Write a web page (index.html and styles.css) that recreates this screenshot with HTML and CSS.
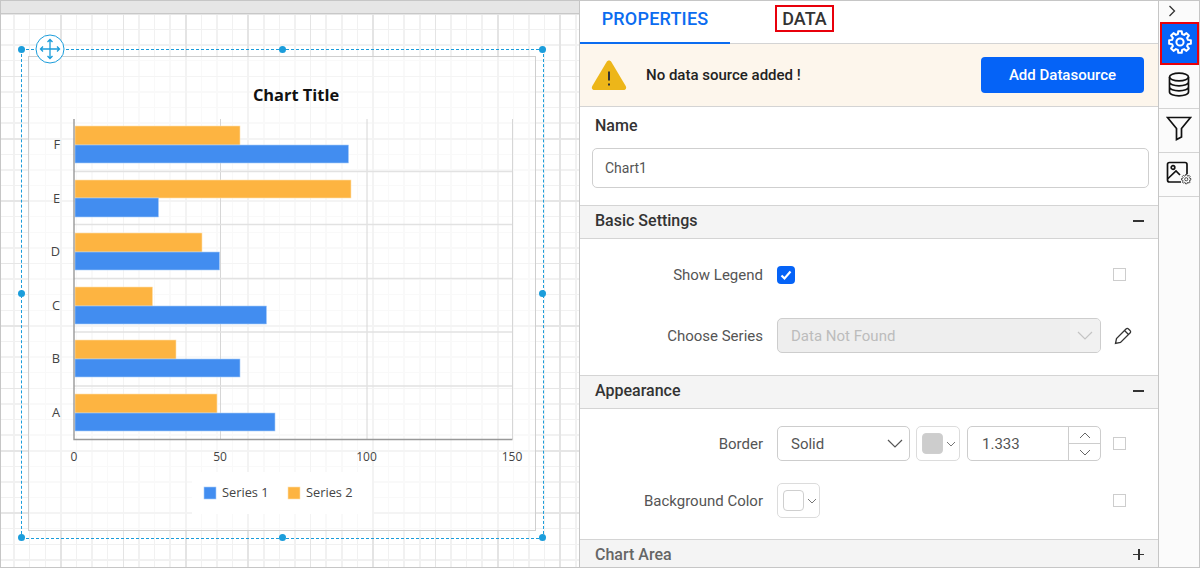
FILE: index.html
```html
<!DOCTYPE html>
<html lang="en">
<head>
  <meta charset="UTF-8">
  <title>Report Designer</title>
  <link rel="stylesheet" href="styles.css">
</head>
<body>

<svg class="defs" width="0" height="0">
  <symbol id="cog" viewBox="0 0 24 24">
    <polygon points="9.88,4.08 10.28,1.14 13.72,1.14 14.12,4.08 16.1,4.9 18.47,3.1 20.9,5.53 19.1,7.9 19.92,9.88 22.86,10.28 22.86,13.72 19.92,14.12 19.1,16.1 20.9,18.47 18.47,20.9 16.1,19.1 14.12,19.92 13.72,22.86 10.28,22.86 9.88,19.92 7.9,19.1 5.53,20.9 3.1,18.47 4.9,16.1 4.08,14.12 1.14,13.72 1.14,10.28 4.08,9.88 4.9,7.9 3.1,5.53 5.53,3.1 7.9,4.9"/>
    <circle cx="12" cy="12" r="3.6"/>
  </symbol>
</svg>

<div class="app">

  <div class="designer">
    <div class="ruler"></div>
    <div class="canvas">
      <div class="item">
        <div class="chart">
          <svg class="chart-svg" width="506" height="473" viewBox="29 57 506 473">
            <g class="grid-lines">
              <path d="M220.5 119V439M367 119V439M512.5 119V439"/>
              <path class="row-line" d="M74 171.5H512M74 224.5H512M74 278.5H512M74 332H512M74 386H512"/>
            </g>
            <g class="bars-orange">
              <rect x="75" y="126" width="165" height="19"/>
              <rect x="75" y="180" width="276" height="18"/>
              <rect x="75" y="233" width="127" height="19"/>
              <rect x="75" y="287" width="77.500" height="19"/>
              <rect x="75" y="340" width="101" height="19"/>
              <rect x="75" y="394" width="142" height="19"/>
            </g>
            <g class="bars-blue">
              <rect x="75" y="145" width="273.500" height="18"/>
              <rect x="75" y="198" width="83.500" height="19"/>
              <rect x="75" y="252" width="144.500" height="18"/>
              <rect x="75" y="306" width="191.500" height="18"/>
              <rect x="75" y="359" width="165" height="18"/>
              <rect x="75" y="413" width="200" height="18"/>
            </g>
            <path class="axis" d="M74 119V439.500H512.500"/>
            <text class="title" x="296" y="100.500" text-anchor="middle">Chart Title</text>
            <g class="labels cat" text-anchor="end">
              <text x="60" y="149">F</text>
              <text x="60" y="203">E</text>
              <text x="60" y="256">D</text>
              <text x="60" y="310">C</text>
              <text x="60" y="363">B</text>
              <text x="60" y="417">A</text>
            </g>
            <g class="labels" text-anchor="middle">
              <text x="74" y="461">0</text>
              <text x="220" y="461">50</text>
              <text x="366.500" y="461">100</text>
              <text x="512" y="461">150</text>
            </g>
            <rect class="legend-bg" x="192" y="472" width="180" height="42"/>
            <rect class="bars-blue" x="204" y="487" width="12" height="12"/>
            <rect class="bars-orange" x="288" y="487" width="12" height="12"/>
            <g class="labels cat">
              <text x="222" y="497">Series 1</text>
              <text x="306" y="497">Series 2</text>
            </g>
          </svg>
        </div>
        <span class="handle h-tl"></span>
        <span class="handle h-tc"></span>
        <span class="handle h-tr"></span>
        <span class="handle h-ml"></span>
        <span class="handle h-mr"></span>
        <span class="handle h-bl"></span>
        <span class="handle h-bc"></span>
        <span class="handle h-br"></span>
        <svg class="move" width="30" height="30" viewBox="0 0 30 30">
          <circle cx="15" cy="15" r="14"/>
          <path d="M15 5.500V24.500M5.500 15H24.500M12.500 8L15 5.500L17.500 8M12.500 22L15 24.500L17.500 22M8 12.500L5.500 15L8 17.500M22 12.500L24.500 15L22 17.500"/>
        </svg>
      </div>
    </div>
  </div>

  <div class="panel">
    <div class="tabs">
      <div class="tab active">PROPERTIES</div>
      <div class="tab tab-data">DATA</div>
    </div>

    <div class="notice">
      <svg class="warn" width="36" height="32" viewBox="0 0 36 32">
        <path class="warn-bg" d="M18 1.500C19 1.500 19.800 2 20.400 3L34.700 27C35.800 29 34.800 31 32.500 31H3.500C1.200 31 .2 29 1.300 27L15.600 3C16.200 2 17 1.500 18 1.500Z"/>
        <path class="warn-mark" d="M18 12.500V21.500M18 24.500V26.500"/>
      </svg>
      <span class="notice-text">No data source added !</span>
      <button class="add-btn">Add Datasource</button>
    </div>

    <div class="name-block">
      <div class="name-label">Name</div>
      <div class="name-input">Chart1</div>
    </div>

    <div class="section-head">
      <span>Basic Settings</span>
      <span class="toggle minus"></span>
    </div>
    <div class="section-body basic">
      <div class="row">
        <label class="row-label">Show Legend</label>
        <div class="controls">
          <svg class="check" width="18" height="18" viewBox="0 0 18 18">
            <rect width="18" height="18" rx="4"/>
            <path d="M4.500 9.500L7.500 12.500L13.500 5.500"/>
          </svg>
        </div>
        <span class="side-box"></span>
      </div>
      <div class="row">
        <label class="row-label">Choose Series</label>
        <div class="controls">
          <div class="select disabled">
            <span class="select-text">Data Not Found</span>
            <span class="select-arrow">
              <svg width="16" height="9" viewBox="0 0 16 9"><path d="M1 1L8 8L15 1"/></svg>
            </span>
          </div>
        </div>
        <svg class="pencil" width="18" height="18" viewBox="0 0 18 18">
          <path d="M1.500 16.500L2.500 11.500L12 2C12.800 1.200 13.800 1.200 14.500 2L16 3.500C16.800 4.200 16.800 5.200 16 6L6.500 15.500Z"/>
          <path d="M10.500 3.500L14.500 7.500"/>
        </svg>
      </div>
    </div>

    <div class="section-head">
      <span>Appearance</span>
      <span class="toggle minus"></span>
    </div>
    <div class="section-body appearance">
      <div class="row">
        <label class="row-label">Border</label>
        <div class="controls">
          <div class="select border-style">
            <span class="select-text">Solid</span>
            <svg class="chev" width="16" height="9" viewBox="0 0 16 9"><path d="M1 1L8 8L15 1"/></svg>
          </div>
          <div class="color-pick border-color">
            <span class="swatch grey"></span>
            <svg class="chev-sm" width="10" height="6" viewBox="0 0 10 6"><path d="M1 1L5 5L9 1"/></svg>
          </div>
          <div class="spinner">
            <span class="spin-value">1.333</span>
            <span class="spin-btns">
              <span class="spin-btn"><svg width="12" height="7" viewBox="0 0 12 7"><path d="M1 6L6 1L11 6"/></svg></span>
              <span class="spin-btn"><svg width="12" height="7" viewBox="0 0 12 7"><path d="M1 1L6 6L11 1"/></svg></span>
            </span>
          </div>
        </div>
        <span class="side-box"></span>
      </div>
      <div class="row">
        <label class="row-label">Background Color</label>
        <div class="controls">
          <div class="color-pick">
            <span class="swatch"></span>
            <svg class="chev-sm" width="10" height="6" viewBox="0 0 10 6"><path d="M1 1L5 5L9 1"/></svg>
          </div>
        </div>
        <span class="side-box"></span>
      </div>
    </div>

    <div class="section-head last">
      <span>Chart Area</span>
      <span class="toggle plus"></span>
    </div>
  </div>

  <div class="sidebar">
    <div class="side-top">
      <svg width="8" height="12" viewBox="0 0 8 12"><path d="M1.500 1L6.500 6L1.500 11"/></svg>
    </div>
    <div class="side-btn selected">
      <svg class="gear" width="24" height="24"><use href="#cog"/></svg>
    </div>
    <div class="side-btn">
      <svg width="22" height="25" viewBox="0 0 22 25">
        <ellipse cx="11" cy="5" rx="9.500" ry="3.800"/>
        <path d="M1.500 5V20C1.500 22.200 5.800 23.800 11 23.800S20.500 22.200 20.500 20V5M1.500 10C1.500 12.200 5.800 13.800 11 13.800S20.500 12.200 20.500 10M1.500 15C1.500 17.200 5.800 18.800 11 18.800S20.500 17.200 20.500 15"/>
      </svg>
    </div>
    <div class="side-btn">
      <svg width="26" height="25" viewBox="0 0 26 25">
        <path d="M1.500 1.500H24.500L15.500 12.500V21L10.500 23.500V12.500Z"/>
      </svg>
    </div>
    <div class="side-btn">
      <svg width="26" height="24" viewBox="0 0 26 24">
        <path d="M15 21H3.500C2.300 21 1.500 20.200 1.500 19V3.500C1.500 2.300 2.300 1.500 3.500 1.500H19C20.200 1.500 21 2.300 21 3.500V13"/>
        <path d="M1.500 18L10 10L14 14"/>
        <circle cx="7" cy="6.500" r="1.800"/>
        <use class="mini-cog" href="#cog" x="15" y="13" width="10.500" height="10.500"/>
      </svg>
    </div>
  </div>

</div>

</body>
</html>
```

FILE: styles.css
```css
* {
  box-sizing: border-box;
}
html, body {
  margin: 0;
  height: 100%;
  overflow: hidden;
}
body {
  font-family: Roboto, "Liberation Sans", sans-serif;
  background: #fff;
  color: #333;
}
.defs {
  display: block;
  height: 0;
}

.app {
  display: flex;
  height: 568px;
  border: 1px solid #c6c6c6;
  overflow: hidden;
}

/* left side, the design surface */
.designer {
  width: 578px;
  display: flex;
  flex-direction: column;
  flex: none;
}
.ruler {
  height: 13px;
  background: #e6e6e6;
  border-bottom: 1px solid #c8c8c8;
  flex: none;
}
.canvas {
  position: relative;
  flex: 1;
  background-color: #fff;
  background-image:
    repeating-linear-gradient(90deg, #e4e4e4 59.2px, #e4e4e4 60.8px, transparent 60.8px, transparent 121.6px),
    repeating-linear-gradient(180deg, #e6e6e6 61.5px, #e6e6e6 63.1px, transparent 63.1px, transparent 123.9px),
    repeating-linear-gradient(90deg, #f1f1f1 12.4px, #f1f1f1 13.9px, transparent 13.9px, transparent 28px),
    repeating-linear-gradient(180deg, #f1f1f1 14.8px, #f1f1f1 16.3px, transparent 16.3px, transparent 30.4px);
}

.item {
  position: absolute;
  left: 20px;
  top: 35px;
  width: 523px;
  height: 490px;
  border: 1px dashed #1b9ddb;
}
.chart {
  position: absolute;
  left: 6px;
  top: 6px;
  width: 508px;
  height: 475px;
  border: 1px solid #cfcfcf;
  background: rgba(255, 255, 255, 0.55);
}
.chart-svg {
  display: block;
}
.grid-lines path {
  fill: none;
  stroke: #d6d6d6;
  stroke-width: 1;
}
.grid-lines .row-line {
  stroke: #e2e2e2;
  stroke-width: 1.5;
}
.bars-orange rect, rect.bars-orange {
  fill: #fdb441;
  stroke: #fde0ae;
  stroke-width: 0.6;
}
.bars-blue rect, rect.bars-blue {
  fill: #428df0;
  stroke: #a9ccf8;
  stroke-width: 0.6;
}
.axis {
  fill: none;
  stroke: #999;
  stroke-width: 1.4;
}
.title {
  font-family: "Open Sans", sans-serif;
  font-weight: 700;
  font-size: 16.4px;
  fill: #111;
}
.labels text {
  font-family: "Open Sans", sans-serif;
  font-size: 12px;
  fill: #444;
}
.labels.cat text {
  font-size: 12.800px;
}
.legend-bg {
  fill: #fff;
}

.handle {
  position: absolute;
  width: 7px;
  height: 7px;
  margin: -4px 0 0 -4px;
  border-radius: 50%;
  background: #1b9ddb;
}
.h-tl { left: 0; top: 0; }
.h-tc { left: 50%; top: 0; }
.h-tr { left: 100%; top: 0; }
.h-ml { left: 0; top: 50%; }
.h-mr { left: 100%; top: 50%; }
.h-bl { left: 0; top: 100%; }
.h-bc { left: 50%; top: 100%; }
.h-br { left: 100%; top: 100%; }

.move {
  position: absolute;
  left: 13px;
  top: -16px;
}
.move circle {
  fill: #fff;
  stroke: #1b9ddb;
  stroke-width: 1;
}
.move path {
  fill: none;
  stroke: #1b9ddb;
  stroke-width: 1.3;
}

/* properties panel */
.panel {
  width: 579px;
  flex: none;
  border-left: 1px solid #c6c6c6;
  overflow: hidden;
}
.tabs {
  display: flex;
  align-items: flex-start;
  height: 43px;
  border-bottom: 1px solid #d4d4d4;
}
.tab {
  font-size: 18px;
  font-weight: 500;
  color: #333;
}
.tab.active {
  width: 150px;
  height: 43px;
  line-height: 35px;
  text-align: center;
  letter-spacing: 0.2px;
  color: #0b6cf0;
  border-bottom: 2px solid #0b6cf0;
}
.tab-data {
  margin: 4px 0 0 45px;
  width: 59px;
  height: 27px;
  line-height: 23px;
  text-align: center;
  border: 2px solid #e8000b;
}
.notice {
  display: flex;
  align-items: center;
  height: 63px;
  padding: 0 14px 0 11px;
  background: #fdf6ec;
  border-bottom: 1px solid #d4d4d4;
}
.warn {
  flex: none;
}
.warn-bg {
  fill: #edb619;
}
.warn-mark {
  fill: none;
  stroke: #333;
  stroke-width: 2;
}
.notice-text {
  margin-left: 19px;
  font-size: 15px;
  font-weight: 500;
  color: #222;
}
.add-btn {
  margin-left: auto;
  width: 163px;
  height: 36px;
  border: 0;
  border-radius: 4px;
  background: #0563f7;
  color: #fff;
  font-family: inherit;
  font-size: 15px;
  font-weight: 500;
}
.name-block {
  height: 98px;
  padding: 9px 9px 0 12px;
}
.name-label {
  padding-left: 3px;
  font-size: 16px;
  font-weight: 500;
  line-height: 20px;
  color: #333;
}
.name-input {
  margin-top: 12px;
  height: 40px;
  line-height: 38px;
  padding-left: 12px;
  border: 1px solid #cfcfcf;
  border-radius: 5px;
  font-size: 14px;
  color: #555;
}
.section-head {
  display: flex;
  justify-content: space-between;
  align-items: center;
  height: 34px;
  padding: 0 14px 3px 15px;
  background: #f4f4f4;
  border-top: 1px solid #d4d4d4;
  border-bottom: 1px solid #d4d4d4;
  font-size: 16px;
  font-weight: 500;
  color: #333;
}
.section-head.last {
  height: 29px;
  padding: 1px 14px 0 15px;
  color: #666;
  border-bottom-color: #c6c6c6;
}
.toggle {
  position: relative;
  width: 11px;
  height: 11px;
}
.toggle::before {
  content: "";
  position: absolute;
  left: 0;
  top: 5px;
  width: 11px;
  height: 1.5px;
  background: #333;
}
.plus::after {
  content: "";
  position: absolute;
  left: 5px;
  top: 0;
  width: 1.5px;
  height: 11px;
  background: #333;
}
.section-body {
  display: flex;
  flex-direction: column;
}
.basic {
  height: 136px;
  padding-top: 18px;
  gap: 26px;
}
.appearance {
  height: 130px;
  padding-top: 17px;
  gap: 22px;
}
.row {
  display: flex;
  align-items: center;
  height: 35px;
}
.row-label {
  width: 183px;
  text-align: right;
  font-size: 15px;
  color: #555;
}
.controls {
  display: flex;
  gap: 6px;
  width: 324px;
  margin-left: 14px;
  flex: none;
}
.side-box {
  width: 13px;
  height: 13px;
  margin-left: 12px;
  border: 1px solid #cdcdcd;
}
.check {
  display: block;
  flex: none;
}
.check rect {
  fill: #0563f7;
}
.check path {
  fill: none;
  stroke: #fff;
  stroke-width: 2.2;
}
.select {
  display: flex;
  align-items: center;
  justify-content: space-between;
  height: 35px;
  width: 100%;
  padding-left: 13px;
  border: 1px solid #cdcdcd;
  border-radius: 5px;
  font-size: 15px;
  color: #555;
}
.select.disabled {
  background: #eee;
  color: #bcbcbc;
  overflow: hidden;
}
.select-arrow {
  display: flex;
  align-items: center;
  justify-content: center;
  width: 30px;
  height: 100%;
  background: #f1f1f1;
}
.select-arrow path {
  fill: none;
  stroke: #c4c4c4;
  stroke-width: 1.2;
}
.border-style {
  width: 133px;
  padding-right: 6px;
  flex: none;
}
.chev path {
  fill: none;
  stroke: #555;
  stroke-width: 1.2;
}
.pencil {
  margin-left: 13px;
  flex: none;
}
.pencil path {
  fill: none;
  stroke: #333;
  stroke-width: 1.3;
}
.color-pick {
  display: flex;
  align-items: center;
  gap: 3px;
  width: 43px;
  height: 35px;
  padding-left: 5px;
  border: 1px solid #dcdcdc;
  border-radius: 5px;
  flex: none;
}
.border-color {
  width: 44px;
}
.swatch {
  width: 21px;
  height: 21px;
  border: 1px solid #cfcfcf;
  border-radius: 4px;
  background: #fff;
}
.swatch.grey {
  background: #cdcdcd;
}
.chev-sm path {
  fill: none;
  stroke: #777;
  stroke-width: 1;
}
.spinner {
  display: flex;
  align-items: center;
  justify-content: space-between;
  height: 35px;
  flex: 1;
  margin-left: 1px;
  padding-left: 14px;
  border: 1px solid #cdcdcd;
  border-radius: 5px;
  font-size: 15px;
  color: #555;
}
.spin-btns {
  display: flex;
  flex-direction: column;
  width: 32px;
  height: 100%;
  border-left: 1px solid #cdcdcd;
}
.spin-btn {
  display: flex;
  flex: 1;
  align-items: center;
  justify-content: center;
}
.spin-btn:first-child {
  border-bottom: 1px solid #cdcdcd;
}
.spin-btn path {
  fill: none;
  stroke: #666;
  stroke-width: 1;
}

/* icon strip on the right */
.sidebar {
  flex: 1;
  border-left: 1px solid #c6c6c6;
  background: #fbfbfb;
}
.side-top {
  display: flex;
  align-items: center;
  height: 21px;
  padding: 0 0 2px 9px;
}
.side-top path {
  fill: none;
  stroke: #333;
  stroke-width: 1.3;
}
.side-btn {
  display: flex;
  align-items: center;
  justify-content: center;
  height: 44px;
  padding-bottom: 4px;
  border-bottom: 1px solid #d4d4d4;
}
.side-btn svg {
  fill: none;
  stroke: #111;
  stroke-width: 1.7;
}
.side-btn .mini-cog {
  stroke-width: 2.2;
  stroke: #444;
  fill: #fff;
}
.side-btn.selected {
  height: 43px;
  margin-left: 1px;
  background: #0563f7;
  border: 2px solid #e8000b;
}
.side-btn.selected svg {
  stroke: #fff;
  stroke-width: 2;
  stroke-linejoin: round;
}
```
